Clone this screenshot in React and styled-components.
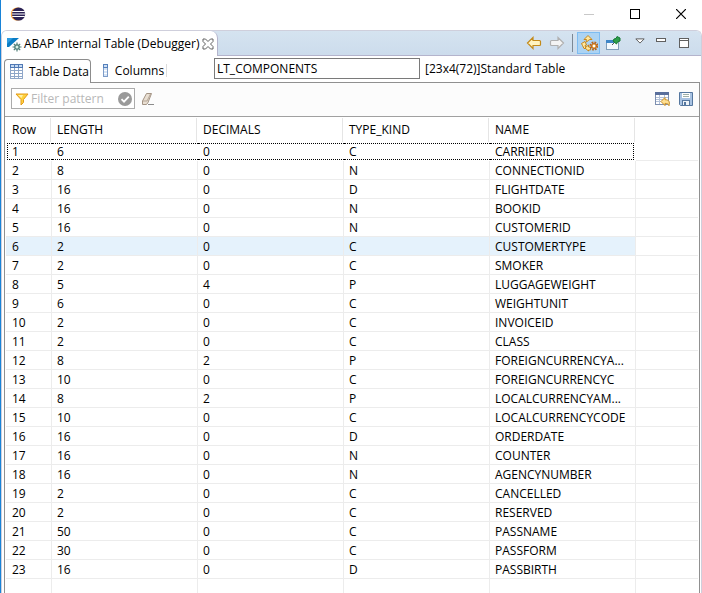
import React, { useState } from "react";
import styled, { createGlobalStyle, css } from "styled-components";

const GlobalStyle = createGlobalStyle`
  * {
    box-sizing: border-box;
  }
  body {
    margin: 0;
    background: #ffffff;
    color: #000000;
    font: 12px/16px "Open Sans", "Noto Sans", sans-serif;
  }
  button,
  input {
    font: inherit;
    color: inherit;
  }
  svg {
    flex: none;
  }
`;

const Window = styled.div`
  display: flex;
  flex-direction: column;
  height: 100vh;
  overflow: hidden;
  border-left: 1px solid #1883d7;
`;

const TitleBar = styled.header`
  display: flex;
  flex: none;
  align-items: center;
  justify-content: space-between;
  height: 30px;
  padding: 0 13px 2px 9px;
`;

const Row = styled.div`
  display: flex;
  align-items: center;
  gap: ${(props) => props.$gap || 0}px;
`;

const IconButton = styled.button`
  display: flex;
  flex: none;
  align-items: center;
  justify-content: center;
  width: ${(props) => props.$width || 16}px;
  height: 22px;
  padding: 0;
  border: 0;
  background: transparent;
  ${(props) =>
    props.$pressed &&
    css`
      border: 1px solid #7dbcf2;
      background: #acd3f3;
    `};
`;

const View = styled.main`
  display: flex;
  flex: 1;
  flex-direction: column;
  min-height: 0;
  border: 1px solid #cfcfdc;
  border-bottom: 0;
  border-radius: 6px 6px 0 0;
`;

const ViewBar = styled.div`
  display: flex;
  flex: none;
  align-items: stretch;
  justify-content: space-between;
  height: 25px;
  padding-right: 1px;
  border-bottom: 1px solid #b4b4cc;
  border-radius: 5px 5px 0 0;
  background: linear-gradient(#d5e3f0, #ccdcec);
`;

const ViewTab = styled.div`
  display: flex;
  align-items: center;
  height: 25px;
  width: 216px;
  padding: 0 3px 0 4px;
  border-right: 1px solid #b4b4cc;
  border-radius: 5px 7px 0 0;
  background: #ffffff;
  white-space: nowrap;
`;

const ViewTitle = styled.span`
  flex: 1;
  min-width: 0;
  padding-left: 2px;
`;

const Divider = styled.span`
  width: 1px;
  height: ${(props) => props.$height}px;
  margin: 0 4px;
  background: ${(props) => props.$color};
`;

const Body = styled.div`
  display: flex;
  flex: 1;
  flex-direction: column;
  min-height: 0;
  padding: 0 1px 0 2px;
`;

const Strip = styled.div`
  display: flex;
  flex: none;
  align-items: center;
  height: 26px;
  padding-bottom: 1px;
`;

const Tabs = styled.div`
  display: flex;
  flex: none;
  align-self: flex-end;
  align-items: flex-end;
  width: 210px;
  margin-bottom: -1px;
`;

const Tab = styled.button`
  display: flex;
  align-items: center;
  gap: 6px;
  height: 23px;
  padding: 0 3px 0 12px;
  border: 0;
  background: transparent;
  white-space: nowrap;
  ${(props) =>
    props.$active
      ? css`
          position: relative;
          height: 24px;
          margin-bottom: -1px;
          padding: 0 1px 0 4px;
          border: 1px solid #8c8c8c;
          border-bottom: 0;
          border-radius: 4px 4px 0 0;
          background: linear-gradient(#ffffff, #fcfcfc);
        `
      : css`
          background: linear-gradient(#dcdcdc, #dcdcdc) no-repeat right 5px / 1px
            13px;
        `};
`;

const VariableInput = styled.input`
  width: 206px;
  height: 21px;
  padding: 0 2px;
  border: 1px solid #7a7a7a;
  background: #ffffff;
`;

const TypeInfo = styled.span`
  padding-left: 5px;
  white-space: nowrap;
`;

const Panel = styled.section`
  display: flex;
  flex: 1;
  flex-direction: column;
  min-height: 0;
  overflow: hidden;
  border: 1px solid #909090;
  border-bottom: 0;
`;

const FilterBar = styled.div`
  display: flex;
  flex: none;
  align-items: center;
  justify-content: space-between;
  height: 34px;
  padding: 0 5px 2px 6px;
  border-bottom: 1px solid #a0a0a0;
  background: #fcfcfc;
`;

const FilterBox = styled.label`
  display: flex;
  align-items: center;
  width: 124px;
  height: 21px;
  padding: 0 1px 0 3px;
  border: 1px solid #ababab;
  background: #ffffff;
`;

const FilterInput = styled.input`
  flex: 1;
  min-width: 0;
  padding: 0 0 0 2px;
  border: 0;
  outline: 0;
  background: transparent;
  &::placeholder {
    color: #b8b8b8;
    opacity: 1;
  }
`;

const Table = styled.table`
  width: 100%;
  border-collapse: separate;
  border-spacing: 0;
  table-layout: fixed;
  padding: 0 1px;
`;

const Col = styled.col`
  width: ${(props) => props.$width}px;
`;

const HeadCell = styled.th`
  height: 25px;
  padding: 0 0 0 5px;
  font-weight: normal;
  text-align: left;
  background: linear-gradient(#e5e5e5, #e5e5e5) no-repeat right 1px top 1px /
    ${(props) => (props.$last ? 0 : 1)}px 100%;
  &:first-child {
    padding-left: 6px;
  }
`;

const Cell = styled.td`
  height: 19px;
  padding: 2px 0 0 5px;
  border-right: ${(props) => (props.$last ? 0 : 1)}px solid #ececec;
  border-bottom: 1px solid #ececec;
  background: ${(props) => (props.$hot ? "#e5f2fc" : "transparent")};
  white-space: nowrap;
  overflow: hidden;
  &:first-child {
    padding-left: 6px;
  }
`;

const FocusCell = styled.td`
  height: 19px;
  padding: 0;
`;

const FocusBox = styled.div`
  height: 17px;
  margin-left: ${(props) => (props.$first ? 1 : 0)}px;
  margin-right: ${(props) => (props.$end ? 2 : 0)}px;
  padding-left: ${(props) => (props.$first ? 4 : 5)}px;
  border-top: 1px dotted #000000;
  border-bottom: 1px dotted #000000;
  border-left: ${(props) => (props.$first ? "1px dotted #000000" : 0)};
  border-right: ${(props) => (props.$end ? "1px dotted #000000" : 0)};
  line-height: 16px;
`;

const EclipseLogo = () => (
  <svg width="16" height="16" viewBox="0 0 16 16">
    <circle cx="7.400" cy="8" r="6.600" fill="#f7941e" />
    <circle cx="8.600" cy="8" r="6.600" fill="#2c2255" />
    <path d="M2.200 5.500h12.600M1.600 8h13.600M2.200 10.500h12.600" stroke="#fff" strokeWidth="1.200" />
  </svg>
);

const ViewIcon = () => (
  <svg width="16" height="16" viewBox="0 0 16 16">
    <path d="M1 2h12L3 11H1z" fill="#0a7cc4" />
    <path d="M1 2h6L1 8z" fill="#2c9be0" />
    <g stroke="#4f7f78" strokeWidth="1.200">
      <path d="M11 6.500v9M6.500 11h9M7.800 7.800l6.400 6.400M14.200 7.800l-6.400 6.400" />
    </g>
    <circle cx="11" cy="11" r="2.800" fill="#4f7f78" />
    <circle cx="11" cy="11" r="1.500" fill="#d8f0e4" />
  </svg>
);

const CloseViewIcon = () => (
  <svg width="12" height="12" viewBox="0 0 12 12">
    <path
      d="M1 1h2.500L6 3.500 8.500 1H11v2.500L8.500 6 11 8.500V11H8.500L6 8.500 3.500 11H1V8.500L3.500 6 1 3.500z"
      fill="#fff"
      stroke="#606060"
    />
  </svg>
);

const ArrowIcon = ({ forward }) => (
  <svg width="16" height="14" viewBox="0 0 16 14">
    <path
      transform={forward ? "matrix(-1 0 0 1 16 0)" : undefined}
      d="M1.500 7L7 1.500v3h6.500q1 0 1 1v3q0 1-1 1H7v3z"
      fill={forward ? "#f4f4f4" : "#fff3bf"}
      stroke={forward ? "#b0b0b0" : "#c38a1a"}
      strokeWidth="1.200"
    />
  </svg>
);

const RefreshIcon = () => (
  <svg width="18" height="18" viewBox="0 0 18 18">
    <g fill="#ffe9a0" stroke="#c8861a">
      <path d="M4 5.500L8 1.500l4 4H9.800Q8 6.500 6.500 8 6 7 6.500 5.500z" />
      <path d="M1.500 9.500L5 7.500l1.500 3.500-1.500.500 1 3H4L2.500 11.500z" />
      <path d="M5 14l3.500-3v2h2v3h-2v1z" />
    </g>
    <circle cx="14" cy="12" r="3.500" fill="none" stroke="#b9651b" strokeWidth="2" strokeDasharray="1.700 1.050" />
    <circle cx="14" cy="12" r="2.500" fill="#f0b050" stroke="#b9651b" />
    <circle cx="14" cy="12" r="1.200" fill="#fff" />
  </svg>
);

const PinIcon = () => (
  <svg width="16" height="16" viewBox="0 0 16 16">
    <rect x="1.500" y="5.500" width="12" height="9" fill="#f4f9fd" stroke="#7f9db9" />
    <path d="M1 5h9v3H1z" fill="#3f86c8" />
    <path d="M7 10l3-3" stroke="#555" />
    <path d="M9 4l2-.500 1-2 3 1.500v3l-2.500 1-1 2L8 6z" fill="#2e9e4b" stroke="#167a33" />
  </svg>
);

const MenuIcon = () => (
  <svg width="10" height="10" viewBox="0 0 10 10">
    <path d="M.8.900h8.400L5 5.100z" fill="#fff" stroke="#606060" />
  </svg>
);

const MinimizeViewIcon = () => (
  <svg width="10" height="10" viewBox="0 0 10 10">
    <rect x=".5" y=".5" width="9" height="3" fill="#fff" stroke="#606060" />
  </svg>
);

const MaximizeViewIcon = () => (
  <svg width="10" height="10" viewBox="0 0 10 10">
    <rect x=".5" y=".5" width="9" height="9" fill="#fff" stroke="#606060" />
    <path d="M0 2.500h10" stroke="#606060" />
  </svg>
);

const TableIcon = () => (
  <svg width="14" height="16" viewBox="0 0 14 16">
    <rect x="1.500" y=".5" width="12" height="14" fill="#fff" stroke="#8ea6c8" />
    <path d="M1 0h13v4H1z" fill="#4f78b4" />
    <path d="M2 2h3M6 2h3M10 2h3" stroke="#c6daf2" strokeWidth="2" />
    <path d="M5.500 4v11M9.500 4v11M2 6.500h11M2 9.500h11M2 12.500h11" stroke="#8ea6c8" />
  </svg>
);

const ColumnIcon = () => (
  <svg width="6" height="14" viewBox="0 0 6 14">
    <rect x=".5" y=".5" width="4" height="12" fill="#d6e4f6" stroke="#7d9cc8" />
    <path d="M0 0h5v4H0z" fill="#5580bb" />
    <path d="M1 2h3" stroke="#cfe0f5" strokeWidth="2" />
    <path d="M1 6.500h3M1 9.500h3" stroke="#fff" />
  </svg>
);

const FunnelIcon = () => (
  <svg width="14" height="14" viewBox="0 0 14 14">
    <path d="M1 2h12L8.500 7.500v3L6 13V7.500z" fill="#ffd23c" stroke="#e39a1c" />
    <path d="M3 3h5L6.500 6z" fill="#fff2a8" />
  </svg>
);

const CheckIcon = () => (
  <svg width="16" height="16" viewBox="0 0 16 16">
    <circle cx="8" cy="8" r="7" fill="#9a9a9a" />
    <path d="M4.500 8.200l2.500 2.500 4.800-5" fill="none" stroke="#fff" strokeWidth="1.800" />
  </svg>
);

const EraserIcon = () => (
  <svg width="14" height="14" viewBox="0 0 14 14">
    <path d="M5.500 1.500h5L7 10.500l-1.500 2h-4V9z" fill="#e9dfd2" stroke="#a39384" />
    <path d="M2 9h4l3.500-7" fill="none" stroke="#b5a697" />
    <path d="M7 12.500h6" stroke="#8c8c8c" />
  </svg>
);

const TableReturnIcon = () => (
  <svg width="16" height="16" viewBox="0 0 16 16">
    <rect x=".5" y="1.500" width="13" height="12" fill="#fff" stroke="#7d8fb0" />
    <path d="M0 1h14v3H0z" fill="#5a6f9c" />
    <path d="M4.500 4v9M9.500 4v5M1 6.500h12M1 8.500h7M1 10.500h5" stroke="#b3c1d8" />
    <path d="M6 10.500L10 6.500v2.200c4 0 5 2 4 6-.8-2-2-2.300-4-2.300v2.200z" fill="#ffe092" stroke="#c98d24" />
  </svg>
);

const SaveIcon = () => (
  <svg width="16" height="16" viewBox="0 0 16 16">
    <path d="M1.500 1.500h13v13h-12l-1-1z" fill="#a9c3e2" stroke="#55779f" />
    <rect x="4" y="2" width="8" height="5" fill="#fff" />
    <path d="M5 3.500h6M5 5.500h6" stroke="#9fb0a8" />
    <rect x="4.500" y="9.500" width="7" height="5" fill="#eef3f8" stroke="#55779f" />
    <path d="M6 11h2v3H6z" fill="#55779f" />
  </svg>
);

const columns = ["Row", "LENGTH", "DECIMALS", "TYPE_KIND", "NAME"];

const components = [
  [6, 0, "C", "CARRIERID"],
  [8, 0, "N", "CONNECTIONID"],
  [16, 0, "D", "FLIGHTDATE"],
  [16, 0, "N", "BOOKID"],
  [16, 0, "N", "CUSTOMERID"],
  [2, 0, "C", "CUSTOMERTYPE"],
  [2, 0, "C", "SMOKER"],
  [5, 4, "P", "LUGGAGEWEIGHT"],
  [6, 0, "C", "WEIGHTUNIT"],
  [2, 0, "C", "INVOICEID"],
  [2, 0, "C", "CLASS"],
  [8, 2, "P", "FOREIGNCURRENCYA..."],
  [10, 0, "C", "FOREIGNCURRENCYC"],
  [8, 2, "P", "LOCALCURRENCYAM..."],
  [10, 0, "C", "LOCALCURRENCYCODE"],
  [16, 0, "D", "ORDERDATE"],
  [16, 0, "N", "COUNTER"],
  [16, 0, "N", "AGENCYNUMBER"],
  [2, 0, "C", "CANCELLED"],
  [2, 0, "C", "RESERVED"],
  [50, 0, "C", "PASSNAME"],
  [30, 0, "C", "PASSFORM"],
  [16, 0, "D", "PASSBIRTH"],
];

const FocusedRow = ({ cells }) => (
  <tr>
    {cells.map((value, i) => (
      <FocusCell key={i}>
        <FocusBox $first={i === 0} $end={i === cells.length - 1}>
          {value}
        </FocusBox>
      </FocusCell>
    ))}
    <Cell $last />
  </tr>
);

const DataRow = ({ cells, hot }) => (
  <tr>
    {cells.map((value, i) => (
      <Cell key={i} $hot={hot}>
        {value}
      </Cell>
    ))}
    <Cell $last />
  </tr>
);

const ComponentTable = () => (
  <Table>
    <colgroup>
      <Col $width={46} />
      <Col $width={146} />
      <Col $width={146} />
      <Col $width={146} />
      <Col $width={146} />
      <col />
    </colgroup>
    <thead>
      <tr>
        {columns.map((name) => (
          <HeadCell key={name} scope="col">
            {name}
          </HeadCell>
        ))}
        <HeadCell as="td" $last />
      </tr>
    </thead>
    <tbody>
      {components.map((item, i) =>
        i === 0 ? (
          <FocusedRow key={i} cells={[i + 1, ...item]} />
        ) : (
          <DataRow key={i} cells={[i + 1, ...item]} hot={i === 5} />
        )
      )}
      <DataRow cells={["", "", "", "", ""]} />
    </tbody>
  </Table>
);

export default function App() {
  const [variable, setVariable] = useState("LT_COMPONENTS");
  const [filter, setFilter] = useState("");

  return (
    <Window>
      <GlobalStyle />
      <TitleBar>
        <EclipseLogo />
        <Row $gap={30}>
          <IconButton aria-label="Minimize">
            <svg width="10" height="11" viewBox="0 0 10 11">
              <path d="M0 5.500h10" stroke="#c8c8c8" />
            </svg>
          </IconButton>
          <IconButton aria-label="Maximize">
            <svg width="10" height="10" viewBox="0 0 10 10">
              <rect x=".5" y=".5" width="9" height="9" fill="none" stroke="#000" />
            </svg>
          </IconButton>
          <IconButton aria-label="Close">
            <svg width="10" height="10" viewBox="0 0 10 10">
              <path d="M0 0l10 10M10 0L0 10" stroke="#000" strokeWidth="1.200" />
            </svg>
          </IconButton>
        </Row>
      </TitleBar>
      <View>
        <ViewBar>
          <ViewTab>
            <ViewIcon />
            <ViewTitle>ABAP Internal Table (Debugger)</ViewTitle>
            <IconButton $width={12} aria-label="Close view">
              <CloseViewIcon />
            </IconButton>
          </ViewTab>
          <Row>
            <IconButton $width={24} aria-label="Back">
              <ArrowIcon />
            </IconButton>
            <IconButton $width={22} aria-label="Forward">
              <ArrowIcon forward />
            </IconButton>
            <Divider $height={18} $color="#7c8894" />
            <IconButton $width={23} $pressed aria-label="Refresh">
              <RefreshIcon />
            </IconButton>
            <IconButton $width={26} aria-label="Pin">
              <PinIcon />
            </IconButton>
            <IconButton $width={28} aria-label="View menu">
              <MenuIcon />
            </IconButton>
            <IconButton $width={14} aria-label="Minimize view">
              <MinimizeViewIcon />
            </IconButton>
            <IconButton $width={32} aria-label="Maximize view">
              <MaximizeViewIcon />
            </IconButton>
          </Row>
        </ViewBar>
        <Body>
          <Strip>
            <Tabs role="tablist">
              <Tab role="tab" aria-selected="true" $active>
                <TableIcon />
                Table Data
              </Tab>
              <Tab role="tab" aria-selected="false">
                <ColumnIcon />
                Columns
              </Tab>
            </Tabs>
            <VariableInput
              aria-label="Variable"
              value={variable}
              onChange={(e) => setVariable(e.target.value)}
            />
            <TypeInfo>[23x4(72)]Standard Table</TypeInfo>
          </Strip>
          <Panel>
            <FilterBar>
              <Row $gap={5}>
                <FilterBox>
                  <FunnelIcon />
                  <FilterInput
                    aria-label="Filter pattern"
                    placeholder="Filter pattern"
                    value={filter}
                    onChange={(e) => setFilter(e.target.value)}
                  />
                  <CheckIcon />
                </FilterBox>
                <IconButton aria-label="Clear filter">
                  <EraserIcon />
                </IconButton>
              </Row>
              <Row $gap={7}>
                <IconButton aria-label="Restore layout">
                  <TableReturnIcon />
                </IconButton>
                <IconButton aria-label="Save">
                  <SaveIcon />
                </IconButton>
              </Row>
            </FilterBar>
            <ComponentTable />
          </Panel>
        </Body>
      </View>
    </Window>
  );
}
